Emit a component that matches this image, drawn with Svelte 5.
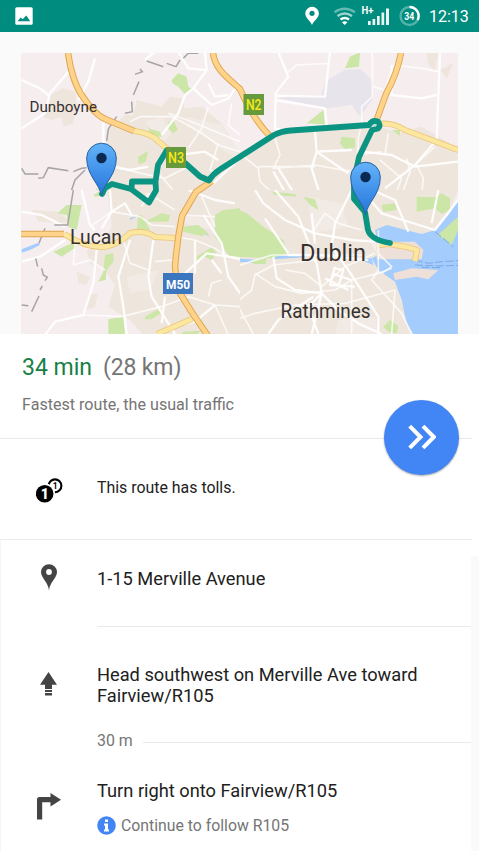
<script>
  // Road and terrain geometry, one list per map tile (drawn at 3x density).
  const tiles = [
    {
      x: 15, y: 45,
      urban: [
        'M105 150L145 130L180 140L185 175L175 235L145 245L140 215L110 225L85 215L100 190Z',
        'M275 450V260L330 210L355 210L365 165L440 185L465 155L500 160L510 190L560 185L620 235L675 330V450Z'
      ],
      pale: ['M515 215L620 240L675 330V350L590 290L520 240Z', 'M390 230L440 215L470 270L440 295Z'],
      green: [
        'M470 105L490 85L515 95L520 125L535 135L510 148L490 125L472 115Z',
        'M400 250L435 260L440 275L410 275Z', 'M460 230L475 225L488 255L475 265L460 250Z',
        'M370 335L400 318L392 350L370 358Z', 'M245 430L275 450H235Z'
      ],
      water: ['M320 438L345 450H330Z'],
      roads: [
        'M20 105L75 130L105 155M20 250L90 205L105 145L165 75M265 230V300M290 365L345 375L400 365',
        'M300 365L380 385L450 400L510 370M435 390L470 430L470 450M345 230L375 215H470L500 230L560 265L610 300L675 320',
        'M570 22L575 75L535 130L510 150L490 205L440 270M535 130L590 180L640 160L675 110M580 115L600 155L640 150',
        'M460 205L530 230L675 290M580 185L560 250L520 310M650 175L640 240L675 270M610 295L585 375L610 385',
        'M390 45L420 20M490 20L520 70L570 75M490 330L570 320L610 345M590 420L675 340M240 40L220 110L190 165'
      ],
      border: [
        'M20 370L30 387L70 387M70 400L85 398L100 368L160 377M175 380L200 370L215 368M210 375L180 405L165 450M275 288L280 252L305 215M330 205L352 200L350 170M355 150L372 110M360 88L382 80L375 72M395 48L445 65M455 55L483 65L495 45M505 40L520 25H550'
      ]
    },
    {
      x: 235, y: 45,
      urban: [
        'M0 330L130 260L270 245L415 240L490 265L560 245L669 310V450H0Z',
        'M575 22H610L600 75L580 60Z', 'M615 75L655 55L635 100Z'
      ],
      pale: [],
      green: [
        'M345 35L375 22L372 65L330 70Z', 'M215 235L265 195L270 238Z',
        'M320 275L360 280V308L330 312L315 295Z', 'M470 255H495V272Z', 'M110 440L180 438L205 450H120Z'
      ],
      purple: ['M270 110L330 75L375 72L415 110L412 165L375 215L350 180L280 190L130 160L170 150H260Z'],
      roads: [
        'M130 22L160 95L122 145L120 250L155 260M120 152L270 155L285 22M120 165L270 190L275 240',
        'M155 85L185 60L280 55M412 22V155L380 185V235L370 280L365 450M415 125L450 135L475 60L560 70L610 80',
        'M615 22L605 285L540 360L450 430M470 60V150L560 160L605 150M385 320L470 330L540 365L669 350',
        'M20 330L70 370L75 410L120 450M120 280L135 330L115 370L240 360L350 380M70 365H240',
        'M240 260L245 320L340 385M245 320L230 370L255 450M350 315L245 320M130 370L155 410L180 450M115 380L155 450',
        'M450 330L460 265M515 340L525 380L500 450M545 360L565 400L560 450M435 345L500 400L480 450M370 330L440 320M540 360L600 305M0 440L60 445'
      ]
    },
    {
      x: 15, y: 190,
      urban: [
        'M275 0H675V435H385L345 390L280 350L300 285L270 240L225 220L215 180L265 160L290 110L285 60Z',
        'M50 60L130 65L170 100L70 95Z', 'M185 245L225 260L215 285L190 280Z', 'M220 315L248 310L240 350L210 360Z'
      ],
      pale: ['M335 260L430 240L405 300L345 310Z', 'M510 70L600 100L590 120L510 100Z'],
      green: [
        'M155 45H200L185 120L160 110L155 75L128 70Z', 'M115 185L170 160L185 170L140 200Z',
        'M235 15L260 0L275 15L240 20Z',
        'M270 195L295 190V215L275 240L272 270L250 275L265 245Z',
        'M600 75L625 60L675 55V205L645 200L600 140Z',
        'M370 75L380 75L405 120H365Z', 'M390 95L440 70L465 75L460 95Z',
        'M505 110L550 105L580 130L560 138L505 125Z',
        'M545 200L590 172L605 190L590 210L570 200L545 210Z',
        'M280 388L325 380L330 432H280Z', 'M390 380L430 358L438 370L410 388H390Z', 'M505 425L560 422L540 435H495Z'
      ],
      water: ['M20 178L70 158L75 165L45 180L20 188Z', 'M562 118L585 140L570 132Z', 'M345 85L370 78L345 90Z'],
      roads: [
        'M20 65L80 75L150 110M20 215L75 200L150 150M285 0L290 65L260 115M200 0L225 105L240 120',
        'M225 110L290 65L375 80L410 105L480 110M480 140L540 150L600 175L640 200L675 210',
        'M245 180L235 280L205 375L120 395L90 435M345 150L310 260L325 350L335 432M415 150L400 260L410 320L460 400L480 432',
        'M205 375L320 380L440 350L520 320L600 345L675 350M325 150L345 220L400 240M180 160L175 225L225 210L270 240',
        'M565 75L620 160L640 260L675 310M510 250L575 190L675 205M450 320L440 400M600 345L540 395L440 420M520 0L600 30L660 40',
        'M380 50L400 10L480 60M580 320L590 280L620 270M560 20L600 110M490 75L600 80M600 345L640 435M420 215L470 210',
        'M290 65L330 40L350 75M540 150V250M590 210L620 250'
      ],
      border: ['M175 0L158 105H118M90 115L72 160M62 205L68 230M80 235L85 255L97 262L90 272M82 288L75 300M72 318L50 365M20 345L40 347']
    },
    {
      x: 235, y: 190,
      urban: ['M0 0H669L640 70L575 135L470 110L400 140L430 200L480 260L500 340L545 435H0Z'],
      pale: ['M310 390L420 380L430 435H300Z', 'M220 20L320 40L340 110L230 130Z'],
      water: [
        'M420 120L455 105L560 132L600 120L640 75L669 30V432H535L515 400L500 330L480 275L430 240L410 205L440 190L430 170Z',
        'M115 198L210 195V202L115 208Z', 'M0 205L70 210L60 218L0 215ZM390 205L410 205L415 225L390 215Z'
      ],
      land: ['M425 155H540L565 180L560 208H425Z', 'M475 250L530 235L610 240L580 268L545 260L480 270Z'],
      green: [
        'M0 55L35 70L85 110L145 150L158 190L110 205L0 200Z', 'M205 20L240 28L250 60L225 45Z',
        'M440 45L480 40L485 60L445 65Z', 'M545 20L600 22L620 10L645 25V60L620 72L600 55L545 65Z',
        'M608 135L669 80V120L650 165Z', 'M445 410L465 390L490 408L485 430L460 425Z', 'M50 210L95 205L92 222H55Z',
        'M110 5L180 12L185 20L120 15Z'
      ],
      roads: [
        'M158 195L250 195L400 210M120 0L190 80L245 220L260 310L230 432M350 0L300 100L290 170L340 240L430 380L430 432',
        'M0 230L110 195H390M0 340L50 300L60 255L115 225L240 210M60 250L120 290L200 310L300 300L350 270L430 250L470 235',
        'M115 200L125 265L180 300L260 310M235 320L130 390L100 432M260 310L220 350L250 432M260 310L310 360L370 400L440 432',
        'M430 120V240L410 270L500 370L530 432M430 190L470 230L440 250M150 240L210 250L260 290L330 230L420 190',
        'M395 45L410 0L480 30L520 125M60 0L85 40L150 90L240 130L350 150L420 155M380 0L440 70L600 120L669 30',
        'M0 390L60 370L180 345L330 340L480 300M10 350L55 432M480 300L470 432M350 270L350 432M230 130L270 70L310 100L380 120',
        'M300 230L285 285L360 290M290 250L350 270M300 235L325 240L310 290M270 265L340 300M230 70L240 160M90 85L160 190M610 0L590 100'
      ],
      lines: ['M540 210L580 220L620 215L669 212M540 225L610 228L669 226M560 232L620 233M600 125L655 170']
    }
  ];

  const highways = [
    'M68 53Q72 80 81 94Q94 114 105 119L134 131',
    'M213 53C215 69 227 77 240 89C247 105 257 123 269 135',
    'M401 53Q397 74 386 94L377 119',
    'M212 181L196 192L182 216Q177 240 175 267L178 290L191 311L208 336',
    'M21 234H64'
  ];
  const arterials = [
    'M134 131Q151 133 158 141L172 153',
    'M379 124Q392 122 405 130L458 150',
    'M64 234Q86 248 104 247Q120 244 130 233Q146 230 155 237L175 238',
    'M157 334L192 319',
    'M379 245L389 244L407 247L417 250L415 261'
  ];
  const route =
    'M102 194L105 188L112 184L131 189L149 202.500L156 190.500L155.500 181.500H132L131.500 189M155.500 181.500L158 165L167 150L185 163L200 176.500L209 180.500Q213 174 220 169.500L274 135Q282 131 291 130.500L369 125Q372 119.500 378 121.500Q381 126 378 128.500L372 130L359 157L354 180L354 199L365 212L368 230Q371 240 390 243';
</script>

{#snippet mapPin(x, y)}
  <g transform="translate({x} {y})">
    <path d="M0 38C-2 25-14.800 18-14.800 0A14.800 14.800 0 0 1 14.800 0C14.800 18 2 25 0 38Z" fill="url(#pin)" stroke="#28639f" stroke-width="1" />
    <circle r="5.200" fill="#0c2952" />
  </g>
{/snippet}

<div class="screen">
  <header class="status">
    <svg class="picture" width="18" height="18" viewBox="0 0 18 18">
      <rect x=".3" y=".3" width="17.4" height="17.4" rx="1.5" fill="#fff" />
      <path d="M2.600 14.200L5.600 10.500L7.600 12.200L11.300 8.500L15.200 14.200Z" fill="#008c7e" />
    </svg>
    <svg class="indicators" width="122" height="32" viewBox="300 0 122 32">
      <path d="M312 25C310 20 305.300 18 305.300 13.400a6.800 6.700 0 0 1 13.600 0C318.900 18 314 20 312 25Z" fill="#fff" />
      <circle cx="312" cy="13.300" r="2.600" fill="#008c7e" />
      <g fill="none" stroke-width="2.400">
        <path d="M334.500 12.200Q344.500 5.200 355 12.200" stroke="#63bab0" />
        <path d="M337.500 16Q344.700 11 352 16" stroke="#9bd3cd" />
        <path d="M340.500 19.500Q344.700 16.500 349 19.500" stroke="#fff" />
      </g>
      <path d="M342 22.200Q344.700 20.500 347.400 22.200L344.700 25Z" fill="#fff" />
      <path d="M368 21h2.700v4H368zM372.500 19h2.700v6h-2.700zM377 16h2.700v9h-2.700zM381.500 12.500h2.700V25h-2.700zM386 8.500h3V25h-3z" fill="#e8f7f5" />
      <text x="361.500" y="14" font-size="10.500" font-weight="700" textLength="12" lengthAdjust="spacingAndGlyphs" fill="#fff">H+</text>
      <circle cx="409.500" cy="16" r="9" fill="none" stroke="#52b4aa" stroke-width="2.400" />
      <path d="M409.500 7a9 9 0 0 1 8.200 13" fill="none" stroke="#fff" stroke-width="2.400" />
      <text x="404.300" y="19.700" font-size="10.300" font-weight="700" textLength="10" lengthAdjust="spacingAndGlyphs" fill="#fff">34</text>
    </svg>
    <time>12:13</time>
  </header>

  <svg class="map" width="437" height="281" viewBox="21 53 437 281">
    <defs>
      <linearGradient id="pin" x1="0" y1="0" x2="0" y2="1">
        <stop offset="0" stop-color="#63b3fa" />
        <stop offset="1" stop-color="#2474dc" />
      </linearGradient>
      <clipPath id="nw"><path d="M0 0H675V435H0Z" /></clipPath>
      <clipPath id="ne"><path d="M15 0H705V435H15Z" /></clipPath>
      <clipPath id="sw"><path d="M0 0H675V450H0Z" /></clipPath>
      <clipPath id="se"><path d="M15 0H705V450H15Z" /></clipPath>
    </defs>
    <rect x="21" y="52" width="438" height="284" fill="#f6edee" />
    {#each tiles as tile, i}
      <g transform="translate({tile.x} {tile.y}) scale(.33333)" clip-path="url(#{['nw', 'ne', 'sw', 'se'][i]})">
        {#each tile.urban as d}<path {d} fill="#eee5dc" />{/each}
        {#each tile.pale as d}<path {d} fill="#f2eae5" />{/each}
        {#each tile.purple ?? [] as d}<path {d} fill="#e8e4ec" />{/each}
        {#each tile.water ?? [] as d}<path {d} fill="#a4ccfc" />{/each}
        {#each tile.land ?? [] as d}<path {d} fill="#eee0d8" />{/each}
        {#each tile.green as d}<path {d} fill="#cbe6a6" />{/each}
        {#each tile.roads as d, n}
          <path {d} fill="none" stroke="#fff" stroke-opacity={n % 2 ? 0.75 : 0.9} stroke-width={n % 2 ? 5 : 7} stroke-linejoin="round" />
        {/each}
        {#each tile.border ?? [] as d}<path {d} fill="none" stroke="#a7a4a6" stroke-width="4.500" />{/each}
        {#each tile.lines ?? [] as d}<path {d} fill="none" stroke="#7ba8e8" stroke-width="3" stroke-dasharray="24 7" />{/each}
      </g>
    {/each}

    <g fill="none" stroke-linejoin="round">
      {#each arterials as d}
        <path {d} stroke="#ecc579" stroke-width="6" />
        <path {d} stroke="#fce7a0" stroke-width="4.400" />
      {/each}
      {#each highways as d}
        <path {d} stroke="#dda650" stroke-width="6.500" />
        <path {d} stroke="#ffd38a" stroke-width="4.600" />
      {/each}
      <path d={route} stroke="#0c9482" stroke-width="5.800" stroke-linecap="round" />
    </g>
    <circle cx="375" cy="125.500" r="1.200" fill="#a9ded5" />

    <rect x="166" y="147" width="20" height="21" fill="#679a3c" />
    <text x="168" y="163" font-size="14" font-weight="500" textLength="16" lengthAdjust="spacingAndGlyphs" fill="#f7e916">N3</text>
    <rect x="243.500" y="94" width="20.500" height="21" fill="#679a3c" />
    <text x="246" y="110" font-size="14" font-weight="500" textLength="15.500" lengthAdjust="spacingAndGlyphs" fill="#f7e916">N2</text>
    <rect x="163" y="273" width="30" height="21" fill="#3c76bf" />
    <text x="166" y="289" font-size="13.500" font-weight="700" textLength="24" lengthAdjust="spacingAndGlyphs" fill="#fff">M50</text>

    {@render mapPin(101.5, 158)}
    {@render mapPin(365.5, 177)}

    <g fill="#35312f">
      <text x="29.500" y="112" font-size="15.500" textLength="67.500" lengthAdjust="spacingAndGlyphs">Dunboyne</text>
      <text x="70" y="244" font-size="19.500" textLength="52" lengthAdjust="spacingAndGlyphs">Lucan</text>
      <text x="300" y="261" font-size="23.500" textLength="66" lengthAdjust="spacingAndGlyphs">Dublin</text>
      <text x="280.500" y="317.500" font-size="19.500" textLength="90" lengthAdjust="spacingAndGlyphs">Rathmines</text>
    </g>
  </svg>

  <main>
    <section class="summary">
      <h1><span class="duration">34 min</span><span class="distance">(28 km)</span></h1>
      <p>Fastest route, the usual traffic</p>
      <button aria-label="Start navigation">
        <svg width="28" height="26" viewBox="0 0 28 26" fill="none" stroke="#fff" stroke-width="4">
          <path d="M1.700 2.200L12.500 13L1.700 23.800M15 2.200L25.800 13L15 23.800" />
        </svg>
      </button>
    </section>

    <section class="tolls">
      <svg width="27" height="26" viewBox="0 0 27 26">
        <circle cx="19" cy="7.800" r="6.400" fill="#fff" stroke="#000" stroke-width="2.100" />
        <circle cx="8.700" cy="15.800" r="10.500" fill="#fff" />
        <text x="16.700" y="11" font-size="8.500" font-weight="700" fill="#000">1</text>
        <circle cx="8.700" cy="15.800" r="8.800" fill="#000" />
        <text x="4.800" y="20.800" font-size="14" font-weight="900" fill="#fff">1</text>
      </svg>
      <p>This route has tolls.</p>
    </section>

    <div class="steps">
      <section class="origin">
        <svg width="16" height="27" viewBox="0 0 16 27">
          <path fill-rule="evenodd" d="M8 26.500C7.300 18 0 14.500 0 7.800a8 7.600 0 0 1 16 0C16 14.500 8.700 18 8 26.500ZM8 5.100a2.900 2.900 0 1 0 0 5.800a2.900 2.900 0 0 0 0-5.800Z" fill="#444" />
        </svg>
        <p>1-15 Merville Avenue</p>
      </section>
      <hr class="rule" />
      <section class="head">
        <svg width="17" height="24" viewBox="0 0 17 24">
          <path d="M8.500 0L17 12.800H12V17H5V12.800H0ZM5 18h7v1.900H5zM5 20.900h7V23.600H5z" fill="#444" />
        </svg>
        <p>Head southwest on Merville Ave toward<br />Fairview/R105</p>
      </section>
      <div class="leg"><span>30 m</span><hr /></div>
      <section class="turn">
        <svg width="24" height="27" viewBox="0 0 24 27">
          <path d="M0 26.500V6.500Q0 4 2.500 4H13.500V0L24 6.700L13.500 13.400V9.200H5.200V26.500Z" fill="#444" />
        </svg>
        <div>
          <p>Turn right onto Fairview/R105</p>
          <div class="note">
            <svg width="19" height="19" viewBox="0 0 19 19">
              <circle cx="9.500" cy="9.500" r="9.300" fill="#4285f4" />
              <path d="M8 3.500h3v2.500H8zM7 7.500h4v6h1V15.500H7V13.500h1V9.500H7z" fill="#fff" />
            </svg>
            <span>Continue to follow R105</span>
          </div>
        </div>
      </section>
    </div>
  </main>
</div>

<style>
  .screen {
    width: 479px;
    height: 851px;
    overflow: hidden;
    background: #fafafa;
    font-family: Roboto, sans-serif;
    color: #222;
  }
  p, h1 { margin: 0; font-weight: 400; white-space: nowrap; }
  hr { margin: 0; border: 0; height: 1px; background: #e9e9e9; }
  svg { display: block; flex: none; }
  .status {
    height: 32px;
    display: flex;
    align-items: center;
    background: #008c7e;
    color: #fff;
  }
  .picture { margin-left: 15px; }
  .indicators { margin-left: 267px; }
  .status time { margin-left: 7px; font-size: 16px; line-height: 32px; white-space: nowrap; padding-top: 1px; }
  .map { margin: 21px 0 0 21px; }
  main { height: 517px; background: #fff; }
  .summary {
    position: relative;
    box-sizing: border-box;
    width: 472px;
    height: 105px;
    padding: 19px 0 0 22px;
    border-bottom: 1px solid #ebebeb;
  }
  h1 { display: flex; gap: 11px; font-size: 23px; line-height: 30px; }
  .duration { color: #178045; }
  .distance { color: #757575; letter-spacing: -0.15px; }
  .summary p { margin-top: 12px; color: #757575; font-size: 16.1px; line-height: 20px; }
  button {
    position: absolute;
    left: 384px;
    top: 66px;
    width: 75px;
    height: 75px;
    padding: 0 0 2px;
    border: 0;
    border-radius: 50%;
    background: #4285f4;
    box-shadow: 0 1px 2px #0005;
    display: grid;
    place-items: center;
  }
  .tolls, .origin, .head, .turn { display: flex; align-items: flex-start; }
  .tolls { box-sizing: border-box; width: 472px; height: 101px; border-bottom: 1px solid #ebebeb; }
  .tolls svg { margin: 39px 34px 0 36px; }
  .tolls p { margin-top: 39px; font-size: 15.9px; line-height: 20px; }
  .steps { box-sizing: border-box; width: 471px; height: 311px; border-left: 1px solid #f5f5f5; box-shadow: 8px 16px 0 #fafafa; }
  .steps p { font-size: 18.25px; line-height: 21px; color: #212121; }
  .origin { height: 86px; }
  .origin svg { margin: 24px 40px 0; }
  .origin p { margin-top: 28px; }
  .rule { margin-left: 96px; }
  .head { height: 104px; }
  .head svg { margin: 45px 40px 0 39px; }
  .head p { margin-top: 37px; }
  .leg { display: flex; align-items: center; padding-left: 96px; height: 20px; color: #757575; font-size: 15.9px; }
  .leg span { width: 46px; white-space: nowrap; line-height: 20px; }
  .leg hr { flex: 1; margin-top: 3px; }
  .turn svg { margin: 42px 36px 0; }
  .turn p { margin-top: 29px; }
  .note { display: flex; align-items: center; margin-top: 14px; gap: 5px; color: #757575; font-size: 15.8px; line-height: 19px; white-space: nowrap; }
  .note span { padding-top: 1px; }
  .turn .note svg { margin: 0; }
</style>
